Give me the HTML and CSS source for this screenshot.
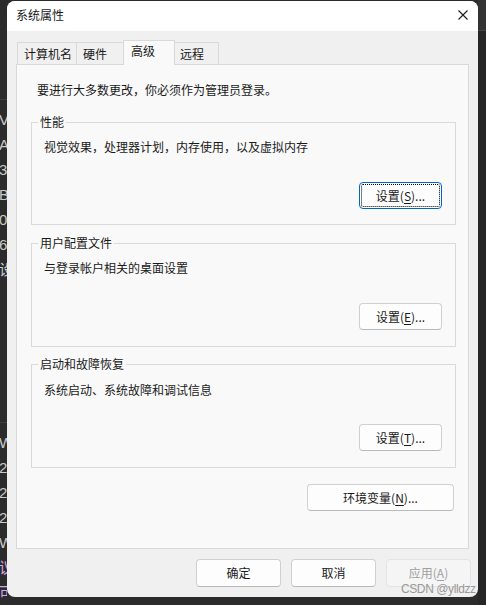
FILE: index.html
```html
<!DOCTYPE html>
<html lang="zh-CN">
<head>
<meta charset="utf-8">
<title>系统属性</title>
<link rel="stylesheet" href="styles.css">
</head>
<body>
<div class="desk">
  <div class="strip strip-left">
    <div class="strip-top"></div>
    <div class="strip-lines">
      <div>V</div><div>A</div><div>32</div><div>B</div><div>00</div><div>64</div><div>设</div>
    </div>
    <div class="strip-gap"></div>
    <div class="strip-lines">
      <div>W</div><div>21</div><div>20</div><div>22</div><div>W</div><div class="pink">议</div><div class="pink">可</div>
    </div>
  </div>

  <div class="window">
    <div class="titlebar">
      <span class="title">系统属性</span>
      <svg class="close" width="10" height="10" viewBox="0 0 10 10"><path d="M0.5 0.5 L9.5 9.5 M9.5 0.5 L0.5 9.5" stroke="#1a1a1a" stroke-width="1.1" fill="none"/></svg>
    </div>
    <div class="content">
      <div class="tabs">
        <div class="tab t1">计算机名</div>
        <div class="tab t2">硬件</div>
        <div class="tab t3 active">高级</div>
        <div class="tab t4">远程</div>
      </div>
      <div class="panel">
        <p class="intro">要进行大多数更改，你必须作为管理员登录。</p>

        <fieldset class="group g1">
          <legend>性能</legend>
          <p class="desc">视觉效果，处理器计划，内存使用，以及虚拟内存</p>
          <div class="btn-row r1"><button class="btn set focus">设置(<u>S</u>)...</button></div>
        </fieldset>

        <fieldset class="group g2">
          <legend>用户配置文件</legend>
          <p class="desc">与登录帐户相关的桌面设置</p>
          <div class="btn-row r2"><button class="btn set">设置(<u>E</u>)...</button></div>
        </fieldset>

        <fieldset class="group g3">
          <legend>启动和故障恢复</legend>
          <p class="desc d3">系统启动、系统故障和调试信息</p>
          <div class="btn-row r3"><button class="btn set">设置(<u>T</u>)...</button></div>
        </fieldset>

        <div class="env-row"><button class="btn env">环境变量(<u>N</u>)...</button></div>
      </div>
      <div class="footer">
        <button class="btn foot">确定</button>
        <button class="btn foot">取消</button>
        <button class="btn foot disabled">应用(<u>A</u>)</button>
      </div>
    </div>
  </div>

  <div class="strip strip-right">
    <div class="rline"></div>
  </div>

  <div class="watermark">CSDN @ylldzz</div>
</div>
</body>
</html>
```

FILE: styles.css
```css
* { box-sizing: border-box; }
html, body { margin: 0; padding: 0; }
body {
  background: #2b2b2b;
  font-family: "Noto Sans CJK SC", sans-serif;
  font-size: 12px;
  color: #1a1a1a;
}
.desk {
  position: relative;
  display: flex;
  width: 486px;
  height: 605px;
  overflow: hidden;
  background: #2b2b2b;
}

/* background strips */
.strip { flex: none; overflow: hidden; }
.strip-left { width: 7px; }
.strip-right { width: 8px; background: #262626; }
.strip-top { height: 100px; border-bottom: 1px solid #3e3e3e; }
.strip-lines {
  padding-top: 7px;
  color: #c9c9c9;
  font-family: "Liberation Sans", "Noto Sans CJK SC", sans-serif;
  font-size: 15px;
  line-height: 25px;
  white-space: nowrap;
}
.strip-lines div { margin-left: -1px; }
.strip-lines .pink { color: #d9a5e6; }
.strip-gap { height: 141px; border-bottom: 1px solid #3e3e3e; }
.rline { height: 31px; background: #333333; border-bottom: 1px solid #444; }

/* window */
.window {
  flex: none;
  width: 471px;
  height: 596px;
  margin-top: 1px;
  background: #f0f0f0;
  border-radius: 8px;
  overflow: hidden;
  display: flex;
  flex-direction: column;
}
.titlebar {
  height: 30px;
  background: #ffffff;
  display: flex;
  align-items: center;
  justify-content: space-between;
  padding: 0 10px 2px 9px;
}
.title { line-height: 16px; }
.close { display: block; }

.content { padding: 0 9px; }

/* tabs */
.tabs {
  display: flex;
  align-items: flex-end;
  margin-top: 9px;
  padding-left: 1px;
  position: relative;
  z-index: 1;
}
.tab {
  height: 22px;
  padding: 3px 0 0 6px;
  line-height: 16px;
  background: #f0f0f0;
  border: 1px solid #d9d9d9;
  border-bottom: none;
  border-right: none;
  white-space: nowrap;
}
.t1 { width: 59px; }
.t2 { width: 47px; }
.t3 { width: 52px; }
.t4 { width: 45px; border-right: 1px solid #d9d9d9; margin-left: -1px; padding-left: 5px; }
.tab.active {
  height: 25px;
  margin-bottom: -1px;
  background: #f9f9f9;
  border-right: 1px solid #d9d9d9;
  padding-top: 2px;
  padding-left: 7px;
}

/* panel */
.panel {
  height: 485px;
  background: #f9f9f9;
  border: 1px solid #d9d9d9;
  padding: 17px 13px 0 14px;
}
.intro { margin: 0 0 0 6px; line-height: 16px; }

.group {
  margin: 0;
  padding: 0;
  min-width: 0;
  width: 425px;
  border: 1px solid #dadada;
}
.group legend {
  margin-left: 6px;
  padding: 0 2px;
  line-height: 16px;
}
.g1 { height: 111px; margin-top: 16px; }
.g2 { height: 112px; margin-top: 10px; }
.g3 { height: 112px; margin-top: 9px; }
.desc { margin: 9px 0 0 12px; line-height: 16px; }
.desc.d3 { margin-top: 10px; }

.btn-row { display: flex; justify-content: flex-end; padding-right: 13px; }
.r1, .r2 { margin-top: 27px; }
.r3 { margin-top: 26px; }

.btn {
  font-family: "Noto Sans CJK SC", sans-serif;
  font-size: 12px;
  line-height: 16px;
  color: #1a1a1a;
  height: 27px;
  padding: 0;
  background: #fdfdfd;
  border: 1px solid #d0d0d0;
  border-bottom-color: #b9b9b9;
  border-radius: 4px;
}
.btn u { text-underline-offset: 2px; }
.btn.set { width: 83px; }
.btn.focus {
  border: 1px solid #0067c0;
  outline: 1px dotted #000;
  outline-offset: -3px;
}
.env-row { display: flex; justify-content: flex-end; margin-top: 16px; padding-right: 1px; }
.btn.env { width: 147px; }

.footer {
  display: flex;
  justify-content: flex-end;
  gap: 10px;
  margin-top: 10px;
  margin-right: -2px;
}
.btn.foot { width: 85px; height: 28px; }
.btn.disabled {
  color: #a0a0a0;
  background: #f5f5f5;
  border-color: #e3e3e3;
}

.watermark {
  position: absolute;
  left: 401px;
  top: 581px;
  font-family: "Liberation Sans", sans-serif;
  font-size: 12px;
  letter-spacing: -0.4px;
  color: rgba(140, 140, 140, 0.9);
  line-height: 16px;
}
```
